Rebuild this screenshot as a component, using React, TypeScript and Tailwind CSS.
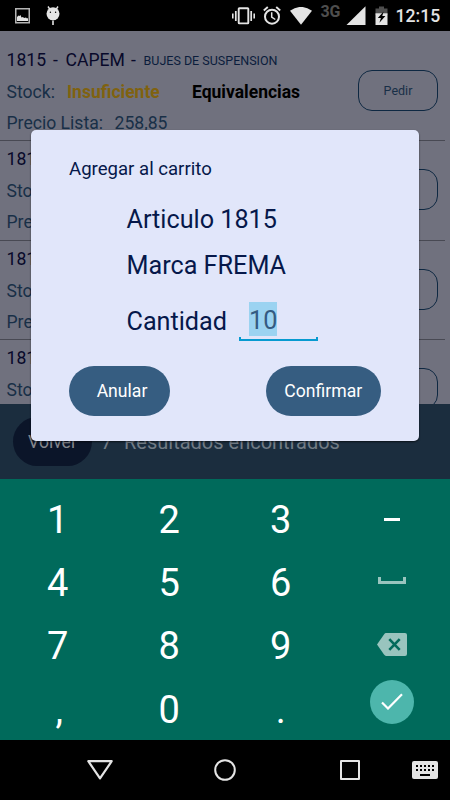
import { clsx } from 'clsx';

interface Article {
  code: string;
  brand: string;
  description: string;
  stock: string;
  price: string;
}

const articles: Article[] = [
  { code: '1815', brand: 'CAPEM', description: 'BUJES DE SUSPENSION', stock: 'Insuficiente', price: '258,85' },
  { code: '1815', brand: '', description: '', stock: '', price: '' },
  { code: '1815', brand: '', description: '', stock: '', price: '' },
  { code: '1815', brand: '', description: '', stock: '', price: '' },
];

function StatusBar() {
  return (
    <header className="flex h-[31px] shrink-0 items-start bg-black text-[#e4e4e4]">
      <svg className="ml-[15px] mt-2 h-4 w-[15px]" viewBox="0 0 15 16" fill="none">
        <rect x="0.75" y="0.75" width="13.5" height="14" stroke="#b5b5b5" strokeWidth="1.5" />
        <path d="M2 13V9l1.5-1.5 1 .5 1-1 1 2.5 1.5-.5 1 1 2-.5 1 1 1-.5V13z" fill="#e4e4e4" />
      </svg>
      <svg className="ml-[15.5px] mt-[5px] h-5 w-[14px]" viewBox="0 0 14 20" fill="#e4e4e4">
        <path d="M2 1.5l2 3M12 1.5l-2 3" stroke="#e4e4e4" strokeWidth="1.4" />
        <circle cx="7" cy="8.8" r="6.5" />
        <rect x="6.2" y="15.5" width="1.6" height="4.5" />
        <circle cx="4.4" cy="7.3" r="0.7" fill="#000" />
        <circle cx="9.6" cy="7.3" r="0.7" fill="#000" />
      </svg>
      <svg className="ml-[172.5px] mt-[7px] h-[18px] w-[23px]" viewBox="0 0 23 18" fill="none" stroke="#e4e4e4">
        <rect x="6.7" y="1.2" width="9.6" height="15.2" rx="0.6" strokeWidth="1.9" />
        <path d="M3.8 4v10M19.2 4v10" strokeWidth="1.7" />
        <path d="M0.8 6.5v5M22.2 6.5v5" strokeWidth="1.6" />
      </svg>
      <svg className="ml-2 mt-[6px] h-[19px] w-[18px]" viewBox="0 0 18 19" fill="none" stroke="#e4e4e4">
        <circle cx="9" cy="10.7" r="7" strokeWidth="2" />
        <path d="M0.8 4.5l4-3.5M17.2 4.5l-4-3.5" strokeWidth="1.9" />
        <path d="M8.7 6.3v4.7l3.6 2.5" strokeWidth="1.5" />
      </svg>
      <svg className="ml-[8.5px] mt-[7px] h-[18px] w-[22px]" viewBox="0 0 22 18" fill="#e4e4e4">
        <path d="M0 3.8Q11-4 22 3.8L11 17.8z" />
      </svg>
      <span className="ml-[9px] mt-[4px] w-[21px] text-[16px] font-bold leading-4 tracking-[-0.2px] text-[#4e4e4e]">3G</span>
      <svg className="ml-[4px] mt-[6px] h-[19px] w-5" viewBox="0 0 20 19" fill="#e4e4e4">
        <path d="M19.5 0.3V19H0.5z" />
      </svg>
      <svg className="ml-[9px] mt-[6px] h-[19px] w-[13px]" viewBox="0 0 13 19">
        <path d="M4 0.5h5V2.5h3.5V9H0.5V2.5H4z" fill="#4e4e4e" />
        <path d="M0.5 7.3h12V19H0.5z" fill="#e4e4e4" />
        <path d="M8.6 5.4L2.8 12h3.1l-1.5 4.8L10.4 10H7.3z" fill="#000" />
      </svg>
      <span className="ml-[8px] mt-[6px] text-[17.6px] font-medium leading-[21px]">12:15</span>
    </header>
  );
}

function ArticleRow({ article }: { article: Article }) {
  return (
    <div className="flex h-[99.4px] w-[445px] shrink-0 items-start border-b border-[#484953] pl-[6.5px] text-[17.6px] text-[#182f47]">
      <div className="min-w-0 flex-1 leading-[31px]">
        <div className="flex h-[31px] whitespace-pre pt-[3px] text-[#08092a]">
          <span className="w-[46.5px]">{article.code}</span>
          {article.brand && (
            <>
              <span className="w-[12.5px]">-</span>
              <span className="w-[65.5px]">{article.brand}</span>
              <span className="w-[12.5px]">-</span>
              <span className="text-[12.5px] text-[#0b1d3c]">{article.description}</span>
            </>
          )}
        </div>
        <div className="flex h-[31px] pt-[4px]">
          <span className="w-[60.5px]">Stock:</span>
          <span className="w-[125px] text-[17.5px] font-bold text-[#80620f]">{article.stock}</span>
          {article.stock && <span className="text-[17.5px] font-bold text-black">Equivalencias</span>}
        </div>
        <div className="flex h-[31px] pt-[4px]">
          <span className="w-[108px]">Precio Lista:</span>
          <span>{article.price}</span>
        </div>
      </div>
      <button className="mr-[7px] mt-[28px] h-[41px] w-20 shrink-0 rounded-[14px] border border-[#0e2842] pt-[2px] text-[12.5px]">
        Pedir
      </button>
    </div>
  );
}

function CartDialog() {
  return (
    <div className="absolute left-[31px] top-[130px] flex h-[311px] w-[388px] flex-col rounded-[5px] bg-[#e1e6fa] text-[#06184a] shadow-[0_1px_2px_rgba(0,0,0,0.6)]">
      <h2 className="ml-[38px] mt-[27px] text-[18.6px] leading-6">Agregar al carrito</h2>
      <div className="ml-[95.5px] flex flex-col text-[25.2px] leading-[30px]">
        <span className="mt-6">Articulo 1815</span>
        <span className="mt-4">Marca FREMA</span>
        <div className="mt-[21px] flex h-[39px]">
          <span className="mt-[5px] w-[112px]">Cantidad</span>
          <div className="flex h-[39px] w-[79px] flex-col">
            <span className="ml-[10.5px] h-[33.5px] w-[27.5px] bg-[#9bd3f1] leading-[37px] text-[#345b82]">10</span>
            <span className="mt-[1px] h-[5px] w-[79px] border-x-2 border-b-2 border-[#079ad0]" />
          </div>
        </div>
      </div>
      <div className="mx-[38px] mt-[24.5px] flex justify-between text-[17.6px] text-white">
        <button className="h-[50px] w-[101px] rounded-full bg-[#365d81] pl-[5px] pt-[2px]">Anular</button>
        <button className="h-[50px] w-[115.5px] rounded-full bg-[#365d81] pt-[2px]">Confirmar</button>
      </div>
    </div>
  );
}

function Key({ label }: { label: string }) {
  return (
    <span className={clsx('flex items-center justify-center text-[38px] leading-none', label === ',' && 'pl-[3px]')}>
      {label}
    </span>
  );
}

function Keypad() {
  return (
    <div className="grid h-[261px] shrink-0 grid-cols-4 grid-rows-[repeat(4,63.3px)] bg-[#006a5b] pl-[2px] pr-[2px] pt-[9px] text-white">
      <Key label="1" />
      <Key label="2" />
      <Key label="3" />
      <div className="flex items-center justify-center">
        <span className="h-[3px] w-4 bg-white" />
      </div>
      <Key label="4" />
      <Key label="5" />
      <Key label="6" />
      <div className="flex items-center justify-center">
        <span className="mb-1 h-[7px] w-7 border-x-[3px] border-b-[3px] border-[#99c4be]" />
      </div>
      <Key label="7" />
      <Key label="8" />
      <Key label="9" />
      <div className="flex items-center justify-center">
        <svg className="mb-1 h-[23px] w-[30px]" viewBox="0 0 30 23">
          <path d="M9 0h19a2 2 0 0 1 2 2v19a2 2 0 0 1-2 2H9q-1 0-2-1.4L0 11.5 7 1.4Q8 0 9 0z" fill="#99c4be" />
          <path d="M12.3 6.2l10.4 10.6M22.7 6.2L12.3 16.8" stroke="#006a5b" strokeWidth="2.6" />
        </svg>
      </div>
      <Key label="," />
      <Key label="0" />
      <Key label="." />
      <div className="flex items-start justify-center">
        <span className="mt-[2px] flex size-11 items-center justify-center rounded-full bg-[#4db6ac]">
          <svg className="h-[17px] w-[22px]" viewBox="0 0 22 17" fill="none" stroke="#fff" strokeWidth="2.2">
            <path d="M1 9.5l6 6L21 1.3" />
          </svg>
        </span>
      </div>
    </div>
  );
}

function NavBar() {
  return (
    <nav className="flex h-[60px] shrink-0 items-center bg-black">
      <svg className="ml-[87px] h-5 w-[26px]" viewBox="0 0 26 20" fill="none" stroke="#e4e4e4" strokeWidth="2.2" strokeLinejoin="round">
        <path d="M1.3 1.2h23.4L13 18.3z" />
      </svg>
      <svg className="ml-[101px] size-[22px]" viewBox="0 0 22 22" fill="none" stroke="#e4e4e4" strokeWidth="2">
        <circle cx="11" cy="11" r="9.8" />
      </svg>
      <span className="ml-[104px] size-5 rounded-[1px] border-2 border-[#e4e4e4]" />
      <svg className="ml-[52px] h-[18px] w-[26px]" viewBox="0 0 26 18">
        <rect width="26" height="18" rx="2" fill="#e4e4e4" />
        <path d="M4 5h18M4 9h18" stroke="#000" strokeWidth="2" strokeDasharray="2 2" />
        <path d="M8 14h10" stroke="#000" strokeWidth="2" />
      </svg>
    </nav>
  );
}

export default function App() {
  return (
    <div className="relative flex h-[800px] w-[450px] flex-col overflow-hidden bg-black font-['Roboto',sans-serif]">
      <StatusBar />
      <main className="flex h-[373px] shrink-0 flex-col overflow-hidden bg-[#70717e] pt-[11px]">
        {articles.map((article, i) => (
          <ArticleRow key={i} article={article} />
        ))}
      </main>
      <footer className="flex h-[75px] shrink-0 items-center bg-[#1b2d3e] text-[20px] text-[#727c86]">
        <button className="ml-[13px] h-[49px] w-[79px] rounded-full bg-[#0b1529] pt-[2px] text-[17.6px] text-[#85878d]">Volver</button>
        <span className="ml-[9px] w-[23px]">7</span>
        <span>Resultados encontrados</span>
      </footer>
      <Keypad />
      <NavBar />
      <CartDialog />
    </div>
  );
}
